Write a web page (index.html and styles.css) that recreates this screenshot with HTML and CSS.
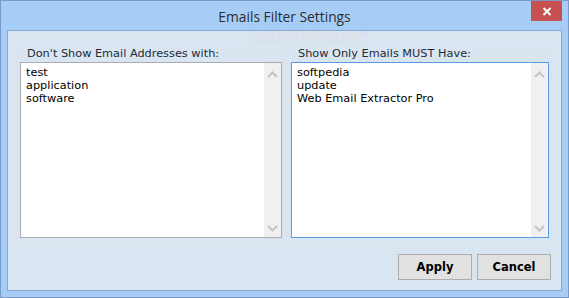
FILE: index.html
```html
<!DOCTYPE html>
<html lang="en">
<head>
  <meta charset="UTF-8" />
  <title>Emails Filter Settings</title>
  <link rel="stylesheet" href="styles.css">
</head>
<body>
  <div class="window">
    <div class="titlebar">
      <span class="title">Emails Filter Settings</span>
      <button class="close" title="Close">
        <svg width="10" height="9" viewBox="0 0 10 9"><path d="M1.5 1 L8.5 8 M8.5 1 L1.5 8" stroke="#fff" stroke-width="2" fill="none"/></svg>
      </button>
    </div>

    <div class="client">
      <div class="watermark">SOFTPEDIA<sup>™</sup></div>

      <div class="panel">
        <fieldset class="group">
          <legend>Don't Show Email Addresses with:</legend>
          <div class="list">
            <div class="items">
              <div>test</div>
              <div>application</div>
              <div>software</div>
            </div>
            <div class="scroll">
              <svg width="11" height="7" viewBox="0 0 11 7"><path d="M1 6 L5.5 1.5 L10 6" stroke="#c4c4c4" stroke-width="2" fill="none"/></svg>
              <svg width="11" height="7" viewBox="0 0 11 7"><path d="M1 1 L5.5 5.5 L10 1" stroke="#c4c4c4" stroke-width="2" fill="none"/></svg>
            </div>
          </div>
        </fieldset>

        <fieldset class="group">
          <legend>Show Only Emails MUST Have:</legend>
          <div class="list focused">
            <div class="items">
              <div>softpedia</div>
              <div>update</div>
              <div>Web Email Extractor Pro</div>
            </div>
            <div class="scroll">
              <svg width="11" height="7" viewBox="0 0 11 7"><path d="M1 6 L5.5 1.5 L10 6" stroke="#c4c4c4" stroke-width="2" fill="none"/></svg>
              <svg width="11" height="7" viewBox="0 0 11 7"><path d="M1 1 L5.5 5.5 L10 1" stroke="#c4c4c4" stroke-width="2" fill="none"/></svg>
            </div>
          </div>
        </fieldset>
      </div>

      <div class="actions">
        <button class="btn">Apply</button>
        <button class="btn">Cancel</button>
      </div>
    </div>
  </div>
</body>
</html>
```

FILE: styles.css
```css
* {
  box-sizing: border-box;
}
body {
  margin: 0;
  background: #fff;
  font-family: 'DejaVu Sans', sans-serif;
}

/* === Window frame === */
.window {
  width: 569px;
  height: 298px;
  border: 1px solid #7a9bc7;
  background: #a6cdf6;
  display: flex;
  flex-direction: column;
}
.titlebar {
  height: 29px;
  position: relative;
  display: flex;
  justify-content: center;
  align-items: center;
}
.title {
  font-family: 'Open Sans', sans-serif;
  font-size: 13.8px;
  color: #2d2d2d;
  margin-top: 1px;
}
.close {
  position: absolute;
  top: 0;
  right: 6px;
  width: 31px;
  height: 20px;
  border: none;
  padding: 0;
  background: #c75050;
  display: flex;
  align-items: center;
  justify-content: center;
}

/* === Client area === */
.client {
  flex: 1;
  margin: 0 6px 6px;
  border: 1px solid #86a8d4;
  background: #d9e6f2;
  padding: 6px 0 0 6px;
  position: relative;
}
.watermark {
  position: absolute;
  left: 242px;
  top: 1px;
  font-family: 'Liberation Sans', sans-serif;
  font-weight: bold;
  font-size: 18px;
  line-height: 13px;
  letter-spacing: 1px;
  color: rgba(255, 255, 255, 0.5);
  text-shadow: 0 0 1px rgba(160, 170, 180, 0.5);
}
.watermark sup {
  font-size: 8px;
  line-height: 0;
}
.panel {
  width: 540px;
  height: 207px;
  border: 1px solid #e1e5ea;
  padding: 9px 1px 1px 1px;
  display: grid;
  grid-template-columns: 269px 265px;
  gap: 2px;
  position: relative;
}
.group {
  margin: 0;
  min-width: 0;
  border: 1px solid #dde2e8;
  padding: 2px 2px 3px 3px;
}
.group legend {
  margin-left: 5px;
  padding: 0 2px;
  font-size: 11.3px;
  line-height: 13px;
  color: #1f2a36;
}
.list {
  height: 176px;
  display: flex;
  background: #fff;
  border: 1px solid #abadb3;
}
.list.focused {
  border-color: #569de5;
}
.items {
  flex: 1;
  padding: 3px 5px;
  font-size: 11.3px;
  line-height: 13px;
  color: #000;
}
.scroll {
  width: 17px;
  background: #f0f0f0;
  display: flex;
  flex-direction: column;
  justify-content: space-between;
  align-items: center;
  padding: 8px 0 5px;
}

/* === Buttons === */
.actions {
  display: flex;
  justify-content: flex-end;
  gap: 5px;
  padding-right: 10px;
  margin-top: 10px;
}
.btn {
  width: 74px;
  height: 26px;
  border: 1px solid #adadad;
  background: #e1e1e1;
  font-family: 'DejaVu Sans', sans-serif;
  font-weight: bold;
  font-size: 11.5px;
  color: #000;
  padding: 0;
}
```
